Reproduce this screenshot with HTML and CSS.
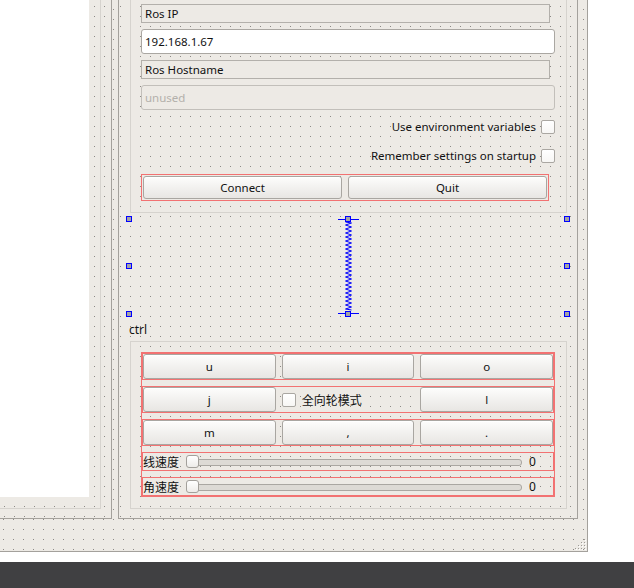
FILE: index.html
```html
<!DOCTYPE html>
<html>
<head>
<meta charset="utf-8">
<title>Form</title>
<link rel="stylesheet" href="styles.css">
</head>
<body>
<div class="window">
  <div class="groups">
    <div class="group group-left">
      <div class="frame frame-left">
        <div class="canvas"></div>
      </div>
    </div>
    <div class="group group-right">
      <div class="frame frame-conn">
        <div class="fieldlabel">Ros IP</div>
        <div class="lineedit">192.168.1.67</div>
        <div class="fieldlabel">Ros Hostname</div>
        <div class="lineedit disabled">unused</div>
        <div class="checkrow"><span class="cbtext">Use environment variables</span><span class="checkbox"></span></div>
        <div class="checkrow"><span class="cbtext">Remember settings on startup</span><span class="checkbox"></span></div>
        <div class="layout conn-buttons">
          <button class="btn">Connect</button>
          <button class="btn">Quit</button>
        </div>
      </div>
      <div class="spacer">
        <svg class="spring" width="21" height="95" viewBox="0 0 21 95">
          <line x1="0" y1="0.5" x2="21" y2="0.5" stroke="#0000ff" stroke-width="1"/>
          <line x1="0" y1="94.5" x2="21" y2="94.5" stroke="#0000ff" stroke-width="1"/>
          <polyline fill="none" stroke="#0000ff" stroke-width="1" points="7.5,3 13.5,4 7.5,6 13.5,8 7.5,10 13.5,12 7.5,14 13.5,16 7.5,18 13.5,20 7.5,22 13.5,24 7.5,26 13.5,28 7.5,30 13.5,32 7.5,34 13.5,36 7.5,38 13.5,40 7.5,42 13.5,44 7.5,46 13.5,48 7.5,50 13.5,52 7.5,54 13.5,56 7.5,58 13.5,60 7.5,62 13.5,64 7.5,66 13.5,68 7.5,70 13.5,72 7.5,74 13.5,76 7.5,78 13.5,80 7.5,82 13.5,84 7.5,86 13.5,88 7.5,90 13.5,91"/>
        </svg>
        <span class="handle h-lt"></span>
        <span class="handle h-lm"></span>
        <span class="handle h-lb"></span>
        <span class="handle h-rt"></span>
        <span class="handle h-rm"></span>
        <span class="handle h-rb"></span>
        <span class="handle h-mt"></span>
        <span class="handle h-mb"></span>
      </div>
      <div class="gtitle">ctrl</div>
      <div class="frame frame-ctrl">
        <div class="layout vbox">
          <div class="layout row keys">
            <button class="btn">u</button>
            <button class="btn">i</button>
            <button class="btn">o</button>
          </div>
          <div class="layout row keys">
            <button class="btn">j</button>
            <div class="cbcell"><span class="checkbox"></span><span class="cjk">全向轮模式</span></div>
            <button class="btn">l</button>
          </div>
          <div class="layout row keys">
            <button class="btn">m</button>
            <button class="btn">,</button>
            <button class="btn">.</button>
          </div>
          <div class="layout row sliderrow">
            <span class="cjk">线速度</span>
            <div class="slider"><span class="knob"></span></div>
            <span class="value">0</span>
          </div>
          <div class="layout row sliderrow">
            <span class="cjk">角速度</span>
            <div class="slider"><span class="knob"></span></div>
            <span class="value">0</span>
          </div>
        </div>
      </div>
    </div>
  </div>
  <svg class="grip" width="13" height="13" viewBox="0 0 13 13">
    <g fill="#9e9b96">
      <rect x="11" y="2" width="1" height="1"/>
      <rect x="8" y="5" width="1" height="1"/><rect x="11" y="5" width="1" height="1"/>
      <rect x="5" y="8" width="1" height="1"/><rect x="8" y="8" width="1" height="1"/><rect x="11" y="8" width="1" height="1"/>
      <rect x="2" y="11" width="1" height="1"/><rect x="5" y="11" width="1" height="1"/><rect x="8" y="11" width="1" height="1"/><rect x="11" y="11" width="1" height="1"/>
    </g>
    <g fill="#ffffff">
      <rect x="12" y="3" width="1" height="1"/>
      <rect x="9" y="6" width="1" height="1"/><rect x="12" y="6" width="1" height="1"/>
      <rect x="6" y="9" width="1" height="1"/><rect x="9" y="9" width="1" height="1"/><rect x="12" y="9" width="1" height="1"/>
      <rect x="3" y="12" width="1" height="1"/><rect x="6" y="12" width="1" height="1"/><rect x="9" y="12" width="1" height="1"/><rect x="12" y="12" width="1" height="1"/>
    </g>
  </svg>
</div>
<div class="gap"></div>
<div class="taskbar"></div>
</body>
</html>
```

FILE: styles.css
```css
* {
  box-sizing: border-box;
}

html, body {
  margin: 0;
  padding: 0;
}

body {
  width: 634px;
  height: 588px;
  overflow: hidden;
  background: #ffffff;
  font-family: "Noto Sans", "Liberation Sans", sans-serif;
  font-size: 11.5px;
  color: #111111;
}

.window {
  position: relative;
  width: 588px;
  height: 552px;
  border-right: 1px solid #a4a19c;
  border-bottom: 1px solid #a4a19c;
  background-color: #edeae5;
  background-image: radial-gradient(circle at 0.5px 0.5px, #8d8a86 0.6px, rgba(0, 0, 0, 0) 0.7px);
  background-size: 10px 10px;
  background-position: 3px 9px;
}

.groups {
  display: flex;
  gap: 6px;
}

.group {
  height: 519px;
  background-color: #edeae5;
  background-image: radial-gradient(circle at 0.5px 0.5px, #8d8a86 0.6px, rgba(0, 0, 0, 0) 0.7px);
  background-size: 10px 10px;
  border-bottom: 1px solid #a4a19c;
}

.group-left {
  width: 112px;
  border-right: 1px solid #a4a19c;
  padding: 0 10px 9px 0;
  background-position: 4px 6px;
}

.frame {
  border: 1px solid #d6d3ce;
}

.frame-left {
  height: 100%;
  border-top: none;
  border-left: none;
  padding: 0 11px 11px 0;
}

.canvas {
  height: 100%;
  background: #ffffff;
}

.group-right {
  width: 460px;
  border-left: 1px solid #a4a19c;
  border-right: 1px solid #a4a19c;
  padding: 0 10px 9px 11px;
  display: flex;
  flex-direction: column;
  background-position: 1px 6px;
}

.frame-conn {
  border-top: none;
  padding: 4px 11px 11px 10px;
  display: flex;
  flex-direction: column;
  gap: 6px;
}

.fieldlabel {
  width: 409px;
  height: 19px;
  border: 1px solid #b3b0ab;
  padding-left: 3px;
  line-height: 17px;
  background: #edeae5;
}

.lineedit {
  height: 25px;
  border: 1px solid #aaa7a2;
  border-radius: 3px;
  background: #ffffff;
  padding-left: 3px;
  line-height: 23px;
  color: #111111;
}

.lineedit.disabled {
  background: #edeae5;
  border-color: #c2bfba;
  color: #b3b0ab;
}

.checkrow {
  height: 23px;
  display: flex;
  justify-content: flex-end;
  align-items: flex-start;
  gap: 5px;
}

.cbtext {
  line-height: 16px;
  margin-top: 3px;
  background: #edeae5;
}

.checkbox {
  display: block;
  width: 14px;
  height: 14px;
  flex: none;
  margin-top: 4px;
  border: 1px solid #aaa7a2;
  border-radius: 2px;
  background: linear-gradient(#ffffff, #f7f6f4);
}

.layout {
  border: 1px solid #f27272;
}

.conn-buttons {
  width: 408px;
  height: 27px;
  padding: 1px;
  display: grid;
  grid-template-columns: 1fr 1fr;
  column-gap: 6px;
}

.btn {
  font: inherit;
  font-size: 11.5px;
  color: #111111;
  margin: 0;
  padding: 0;
  border: 1px solid #a9a6a1;
  border-radius: 3px;
  background: linear-gradient(#fdfdfc, #f2f1ef 50%, #e8e6e3);
  box-shadow: inset 0 1px 0 #ffffff;
  text-align: center;
  height: 100%;
}

.spacer {
  position: relative;
  height: 95px;
  margin-top: 6px;
  flex: none;
}

.spring {
  position: absolute;
  left: 208px;
  top: 0;
}

.handle {
  position: absolute;
  width: 6px;
  height: 6px;
  border: 1px solid #0000ff;
  background: #a3a3a6;
}

.h-lt { left: -4px; top: -3px; }
.h-lm { left: -4px; top: 44px; }
.h-lb { left: -4px; top: 92px; }
.h-rt { left: 434px; top: -3px; }
.h-rm { left: 434px; top: 44px; }
.h-rb { left: 434px; top: 92px; }
.h-mt { left: 215px; top: -3px; }
.h-mb { left: 215px; top: 92px; }

.gtitle {
  height: 27px;
  flex: none;
  margin-left: -1px;
  padding-top: 8px;
  line-height: 16px;
  font-size: 12px;
}

.frame-ctrl {
  height: 168px;
  flex: none;
  padding: 10px 11px 11px 10px;
}

.vbox {
  height: 145px;
  display: flex;
  flex-direction: column;
  gap: 6px;
}

.row {
  flex: none;
}

.keys {
  height: 27px;
  display: grid;
  grid-template-columns: 1fr 1fr 1fr;
  column-gap: 6px;
}

.cbcell {
  display: flex;
  align-items: center;
  gap: 6px;
}

.cbcell .checkbox {
  margin-top: 0;
}

.cjk {
  font-family: "Noto Sans CJK SC", "Noto Sans", sans-serif;
  font-size: 12px;
  line-height: 16px;
}

.sliderrow {
  height: 19px;
  display: grid;
  grid-template-columns: 43px 1fr 24px;
  align-items: center;
}

.slider {
  position: relative;
  height: 13px;
  margin-right: 7px;
}

.slider::before {
  content: "";
  position: absolute;
  left: 2px;
  right: 0;
  top: 4px;
  height: 5px;
  border: 1px solid #aaa7a2;
  border-radius: 3px;
  background: #dddad5;
}

.knob {
  position: absolute;
  left: 0;
  top: 0;
  width: 13px;
  height: 13px;
  border: 1px solid #a3a09b;
  border-radius: 3px;
  background: linear-gradient(#ffffff, #eeece9);
}

.value {
  font-size: 12px;
  line-height: 16px;
}

.grip {
  position: absolute;
  right: 1px;
  bottom: 1px;
}

.gap {
  height: 10px;
}

.taskbar {
  height: 26px;
  background: #404042;
}
```
